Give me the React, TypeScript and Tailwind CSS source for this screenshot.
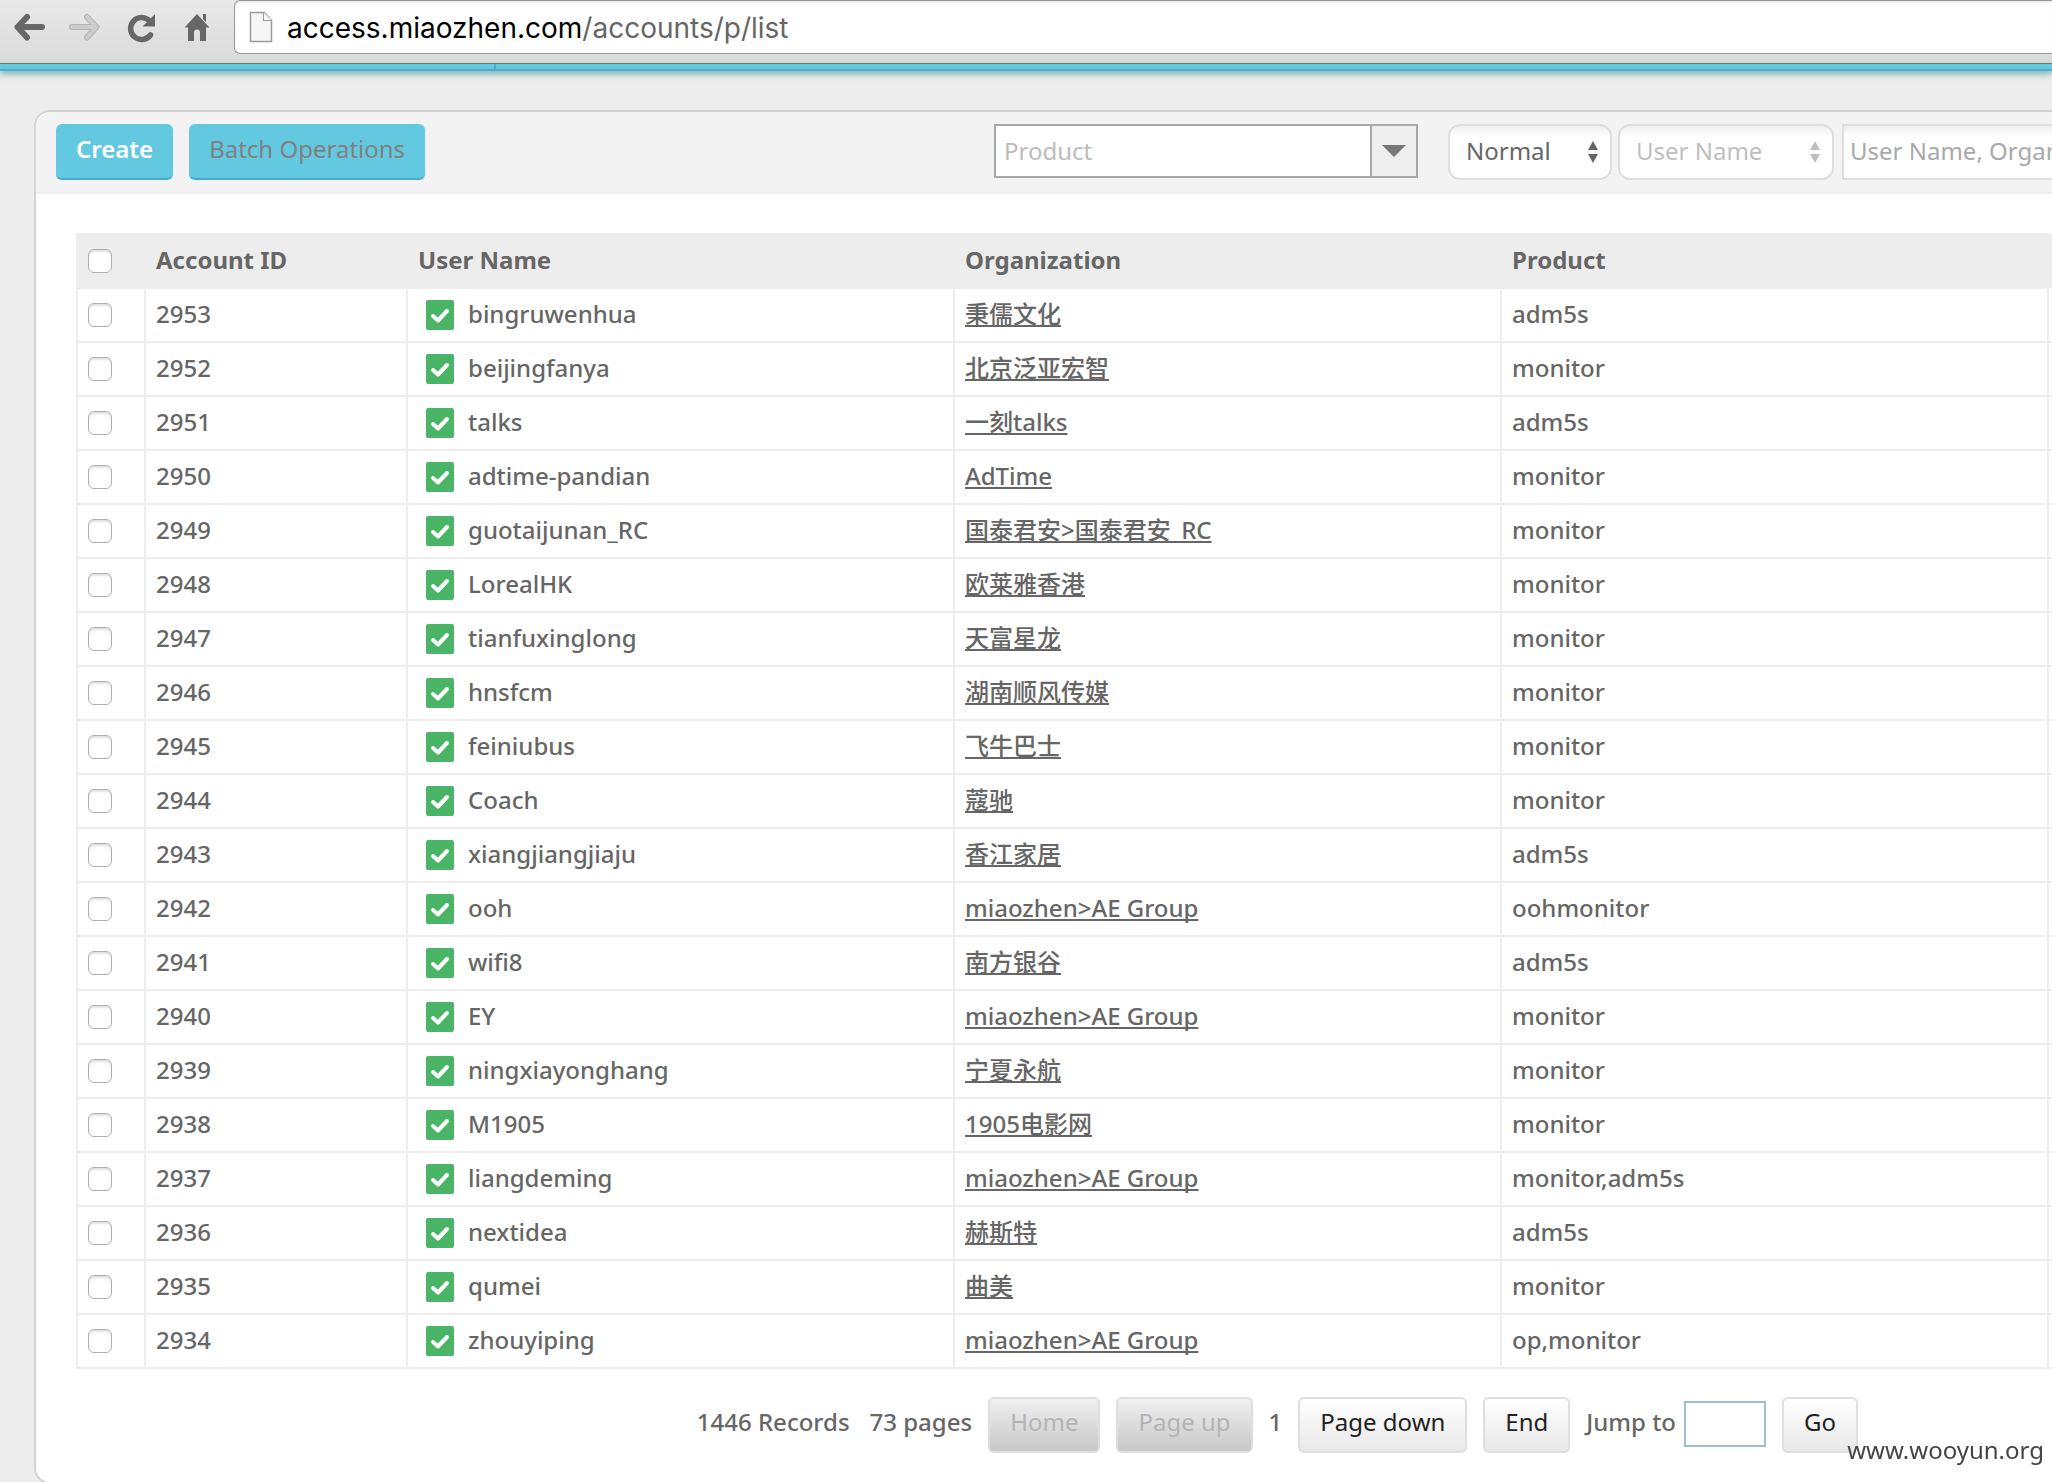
import clsx from 'clsx'
import { useState } from 'react'

interface Account {
  id: number
  userName: string
  organization: string
  product: string
}

const ACCOUNTS: Account[] = [
  { id: 2953, userName: 'bingruwenhua', organization: '秉儒文化', product: 'adm5s' },
  { id: 2952, userName: 'beijingfanya', organization: '北京泛亚宏智', product: 'monitor' },
  { id: 2951, userName: 'talks', organization: '一刻talks', product: 'adm5s' },
  { id: 2950, userName: 'adtime-pandian', organization: 'AdTime', product: 'monitor' },
  { id: 2949, userName: 'guotaijunan_RC', organization: '国泰君安>国泰君安_RC', product: 'monitor' },
  { id: 2948, userName: 'LorealHK', organization: '欧莱雅香港', product: 'monitor' },
  { id: 2947, userName: 'tianfuxinglong', organization: '天富星龙', product: 'monitor' },
  { id: 2946, userName: 'hnsfcm', organization: '湖南顺风传媒', product: 'monitor' },
  { id: 2945, userName: 'feiniubus', organization: '飞牛巴士', product: 'monitor' },
  { id: 2944, userName: 'Coach', organization: '蔻驰', product: 'monitor' },
  { id: 2943, userName: 'xiangjiangjiaju', organization: '香江家居', product: 'adm5s' },
  { id: 2942, userName: 'ooh', organization: 'miaozhen>AE Group', product: 'oohmonitor' },
  { id: 2941, userName: 'wifi8', organization: '南方银谷', product: 'adm5s' },
  { id: 2940, userName: 'EY', organization: 'miaozhen>AE Group', product: 'monitor' },
  { id: 2939, userName: 'ningxiayonghang', organization: '宁夏永航', product: 'monitor' },
  { id: 2938, userName: 'M1905', organization: '1905电影网', product: 'monitor' },
  { id: 2937, userName: 'liangdeming', organization: 'miaozhen>AE Group', product: 'monitor,adm5s' },
  { id: 2936, userName: 'nextidea', organization: '赫斯特', product: 'adm5s' },
  { id: 2935, userName: 'qumei', organization: '曲美', product: 'monitor' },
  { id: 2934, userName: 'zhouyiping', organization: 'miaozhen>AE Group', product: 'op,monitor' },
]

const CELL = 'border-2 border-[#ededed] px-2.5 text-left'
const TEXT_CELL = 'border-2 border-[#ededed] px-2.5 pb-0.5 text-left'

export default function App() {
  return (
    <div className="flex h-screen flex-col overflow-hidden bg-[#ededed] font-['Noto_Sans','Noto_Sans_CJK_SC',sans-serif] text-2xl leading-8 text-[#666]">
      <BrowserBar />
      <div className="relative z-10 flex h-[7px] shrink-0 border-b-2 border-[#4bb0cb] bg-[#63c9e1] shadow-[0_3px_6px_rgba(40,130,140,0.6)]">
        <div className="w-[496px] border-r-2 border-[#4bb0cb]" />
      </div>
      <main className="mt-[39px] ml-[34px] h-[1374px] shrink-0 rounded-l-2xl border-2 border-r-0 border-[#d4d4d4] bg-white">
        <Toolbar />
        <AccountTable />
        <Pagination />
      </main>
      <div className="fixed right-2 bottom-4 text-[#444]">www.wooyun.org</div>
    </div>
  )
}

function BrowserBar() {
  return (
    <header className="flex h-16 shrink-0 items-start border-b border-[#767676] bg-linear-to-b from-[#e9e9e9] to-[#dadada]">
      <nav className="flex h-[54px] items-center gap-[22px] pl-3">
        <button type="button" aria-label="Back">
          <svg width="34" height="32" viewBox="0 0 34 32" fill="none" stroke="#676767" strokeWidth="6" strokeLinecap="round" strokeLinejoin="round">
            <path d="M30 16H6M15 6L5.500 16L15 26.500" />
          </svg>
        </button>
        <button type="button" aria-label="Forward" disabled>
          <svg width="34" height="32" viewBox="0 0 34 32" fill="none" strokeLinecap="round" strokeLinejoin="round">
            <path d="M4 16H28M19 6L28.500 16L19 26.500" stroke="#b4b4b4" strokeWidth="6" />
            <path d="M4 16H28M19 6L28.500 16L19 26.500" stroke="#cccccc" strokeWidth="4" />
          </svg>
        </button>
        <button type="button" aria-label="Reload">
          <svg width="34" height="32" viewBox="0 0 34 32" fill="none">
            <path d="M26.500 24A11 11 0 1 1 24 8.500" stroke="#676767" strokeWidth="5.500" strokeLinecap="round" />
            <path d="M31 3V15.500H18.500Z" fill="#676767" />
          </svg>
        </button>
        <button type="button" aria-label="Home">
          <svg width="34" height="32" viewBox="0 0 34 32" fill="#676767">
            <path d="M17 3L29.500 16.500H26V30H20V21.500A3 3 0 0 0 14 21.500V30H8V16.500H4.500Z" />
            <path d="M23 3H26V11L23 8Z" />
          </svg>
        </button>
      </nav>
      <div className="ml-5 flex h-[54px] flex-1 items-center gap-3.5 rounded-l-md border border-r-0 border-[#989898] bg-white pl-3.5 font-['Inter',sans-serif] text-[28px] shadow-[inset_0_2px_2px_rgba(0,0,0,0.08)]">
        <svg width="24" height="32" viewBox="0 0 24 32">
          <path d="M1.500 1.500H15L22.500 9.500V30.500H1.500Z" fill="#f6f6f6" stroke="#9b9b9b" strokeWidth="1.500" />
          <path d="M14.500 1.500V9.500H22.500" fill="#fff" stroke="#9b9b9b" strokeWidth="1.200" />
        </svg>
        <p className="pt-0.5">
          <span className="text-black">access.miaozhen.com</span>/accounts/p/list
        </p>
      </div>
    </header>
  )
}

function Toolbar() {
  return (
    <div className="flex h-[82px] items-start rounded-tl-2xl border-b-2 border-[#ededed] bg-[#f3f3f3] pt-3 pl-5">
      <div className="flex gap-4">
        <button type="button" className="h-14 rounded-md border-b-2 border-[#43adc9] bg-[#63c9e1] px-5 pb-1 font-semibold text-white">
          Create
        </button>
        <button type="button" disabled className="h-14 rounded-md border-b-2 border-[#43adc9] bg-[#63c9e1] px-5 pb-1 text-[#808080]">
          Batch Operations
        </button>
      </div>
      <div className="ml-auto flex items-start">
        <div className="flex h-[54px] w-[424px] border-2 border-[#a9a9a9] bg-white">
          <input type="text" aria-label="Product" placeholder="Product" className="min-w-0 flex-1 px-2 outline-none placeholder:text-[#bbb]" />
          <button type="button" aria-label="Show products" className="flex w-[46px] items-center justify-center border-l-2 border-[#a9a9a9] bg-[#eee]">
            <svg width="24" height="12" viewBox="0 0 24 12" fill="#777">
              <path d="M0 0H24L12 12Z" />
            </svg>
          </button>
        </div>
        <div className="ml-[30px] flex gap-1.5">
          <FilterSelect label="Status" options={['Normal', 'Disabled']} className="w-[164px] text-[#666]" />
          <FilterSelect label="Search field" options={['User Name', 'Organization']} className="w-[216px] text-[#bfbfbf]" />
        </div>
        <input
          type="text"
          aria-label="Keyword"
          placeholder="User Name, Organization"
          className="ml-2 h-14 w-[210px] border-2 border-r-0 border-[#dedede] bg-white bg-linear-to-b from-[#eee] to-white to-20% pb-1 pl-1.5 outline-none placeholder:text-[#a9a9a9]"
        />
      </div>
    </div>
  )
}

function FilterSelect({ label, options, className }: { label: string; options: string[]; className: string }) {
  return (
    <div className={clsx('relative', className)}>
      <select
        aria-label={label}
        className="h-14 w-full appearance-none rounded-xl border-2 border-[#dedede] bg-white bg-linear-to-b from-[#eee] to-white to-20% pb-0.5 pl-4 outline-none"
      >
        {options.map((option) => (
          <option key={option}>{option}</option>
        ))}
      </select>
      <svg className="pointer-events-none absolute top-4 right-3" width="14" height="24" viewBox="0 0 14 24" fill="currentColor">
        <path d="M7 1L12 10H2ZM7 23L2 14H12Z" />
      </svg>
    </div>
  )
}

function AccountTable() {
  const [selected, setSelected] = useState<number[]>([])
  const allSelected = selected.length === ACCOUNTS.length

  function toggle(id: number) {
    setSelected((current) => (current.includes(id) ? current.filter((item) => item !== id) : [...current, id]))
  }

  return (
    <div className="mt-[39px] pl-10">
      <table className="w-full table-fixed border-collapse font-medium">
        <colgroup>
          <col className="w-[68px]" />
          <col className="w-[262px]" />
          <col />
          <col />
          <col />
          <col className="w-1" />
        </colgroup>
        <thead>
          <tr className="h-[54px] bg-[#ededed]">
            <th className={CELL}>
              <RowCheckbox label="Select all" checked={allSelected} onChange={() => setSelected(allSelected ? [] : ACCOUNTS.map((a) => a.id))} />
            </th>
            <th className={TEXT_CELL}>Account ID</th>
            <th className={TEXT_CELL}>User Name</th>
            <th className={TEXT_CELL}>Organization</th>
            <th className={TEXT_CELL}>Product</th>
            <td />
          </tr>
        </thead>
        <tbody>
          {ACCOUNTS.map((account) => (
            <tr key={account.id} className="h-[54px] border-b-2 border-[#ededed]">
              <td className={CELL}>
                <RowCheckbox label={`Select ${account.userName}`} checked={selected.includes(account.id)} onChange={() => toggle(account.id)} />
              </td>
              <td className={TEXT_CELL}>{account.id}</td>
              <td className={CELL}>
                <div className="flex items-center gap-3.5 pl-2">
                  <ActiveIcon />
                  <span className="pb-0.5">{account.userName}</span>
                </div>
              </td>
              <td className={TEXT_CELL}>
                <a href="#" className="underline decoration-2 underline-offset-2 [text-decoration-skip-ink:none]">
                  {account.organization}
                </a>
              </td>
              <td className={TEXT_CELL}>{account.product}</td>
              <td />
            </tr>
          ))}
        </tbody>
      </table>
    </div>
  )
}

function RowCheckbox({ label, checked, onChange }: { label: string; checked: boolean; onChange: () => void }) {
  return (
    <input
      type="checkbox"
      aria-label={label}
      checked={checked}
      onChange={onChange}
      className="block size-6 appearance-none rounded-md border border-[#b0b0b0] bg-white shadow-[inset_0_2px_2px_rgba(0,0,0,0.12)] checked:bg-[#63c9e1]"
    />
  )
}

function ActiveIcon() {
  return (
    <svg className="shrink-0" width="28" height="30" viewBox="0 0 28 30">
      <rect width="28" height="30" rx="2" fill="#4ab566" />
      <path d="M7 16L12 20.500L21 11" fill="none" stroke="#fff" strokeWidth="4" strokeLinecap="round" strokeLinejoin="round" />
    </svg>
  )
}

const PAGE_BUTTON = 'h-14 rounded-md border-2 border-[#dedede] bg-linear-to-b px-5 pb-1.5'

function Pagination() {
  return (
    <div className="flex items-center justify-end pt-7 pr-[194px]">
      <span className="pb-1.5 font-medium">1446 Records</span>
      <span className="ml-5 pb-1.5 font-medium">73 pages</span>
      <button type="button" disabled className={clsx(PAGE_BUTTON, 'ml-4 from-[#f0f0f0] to-[#c8c8c8] text-[#b4b4b4]')}>
        Home
      </button>
      <button type="button" disabled className={clsx(PAGE_BUTTON, 'ml-4 from-[#f0f0f0] to-[#c8c8c8] text-[#b4b4b4]')}>
        Page up
      </button>
      <span className="mx-4 pb-1.5 font-medium">1</span>
      <button type="button" className={clsx(PAGE_BUTTON, 'from-white to-[#e8e8e8] text-[#222]')}>
        Page down
      </button>
      <button type="button" className={clsx(PAGE_BUTTON, 'ml-4 from-white to-[#e8e8e8] text-[#222]')}>
        End
      </button>
      <label htmlFor="jump-page" className="ml-4 pb-1.5 font-medium">
        Jump to
      </label>
      <input id="jump-page" type="text" className="mb-0.5 ml-2 h-[46px] w-[82px] border-2 border-[#a0bdca] bg-white px-2 outline-none" />
      <button type="button" className={clsx(PAGE_BUTTON, 'ml-4 from-white to-[#e8e8e8] text-[#222]')}>
        Go
      </button>
    </div>
  )
}
